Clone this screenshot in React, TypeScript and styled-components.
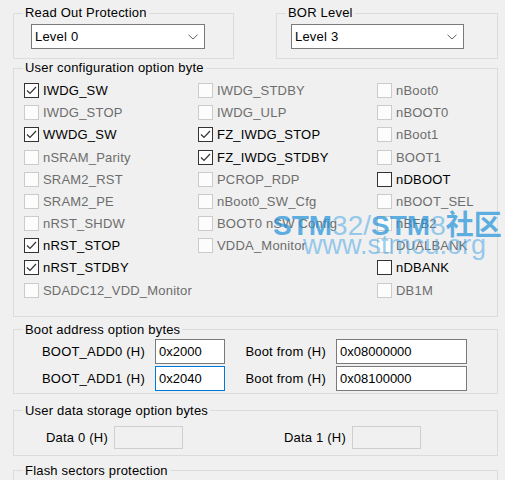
import React from "react";
import styled, { createGlobalStyle } from "styled-components";

const Global = createGlobalStyle`
  html, body {
    margin: 0;
    padding: 0;
    background: #f0f0f0;
    overflow: hidden;
  }
  body {
    font-family: "Liberation Sans", Arial, sans-serif;
    font-size: 13px;
    letter-spacing: 0.2px;
    color: #000;
  }
`;

const Screen = styled.div`
  position: relative;
  width: 505px;
  height: 480px;
  overflow: hidden;
  background: #f0f0f0;
`;

const Page = styled.div`
  width: 485px;
  margin-left: 13px;
  padding-top: 6px;
  display: flex;
  flex-direction: column;
`;

const TopRow = styled.div`
  display: grid;
  grid-template-columns: 221px 222px;
  justify-content: space-between;
`;

const Group = styled.fieldset<{ $mt?: number }>`
  margin: ${(p) => p.$mt ?? 0}px 0 0 0;
  padding: 0;
  min-width: 0;
  border: 1px solid #dcdcdc;
`;

const Legend = styled.legend`
  margin-left: 9px;
  padding: 0 2px;
  line-height: 14px;
  height: 14px;
  font-size: 13px;
`;

const SelectBox = styled.div<{ $w: number; $ml: number }>`
  margin: 4px 0 9px ${(p) => p.$ml}px;
  width: ${(p) => p.$w}px;
  height: 25px;
  box-sizing: border-box;
  border: 1px solid #7a7a7a;
  background: #fff;
  display: flex;
  align-items: center;
  justify-content: space-between;
  padding: 0 6px 0 3px;
`;

const Chevron = () => (
  <svg width="10" height="6" viewBox="0 0 10 6">
    <path d="M0.5 0.8 L5 5 L9.5 0.8" fill="none" stroke="#606060" strokeWidth="1" />
  </svg>
);

const OptionGrid = styled.div`
  display: grid;
  grid-template-columns: 174px 179px 1fr;
  grid-template-rows: repeat(10, 22.2px);
  grid-auto-flow: column;
  padding: 4.4px 0 14.6px 10px;
`;

const Item = styled.label<{ $on: boolean }>`
  display: flex;
  align-items: center;
  gap: 4px;
  white-space: nowrap;
  color: ${(p) => (p.$on ? "#000" : "#6d6d6d")};
`;

const Box = styled.span<{ $on: boolean }>`
  flex: none;
  width: 15px;
  height: 15px;
  box-sizing: border-box;
  border: 1px solid ${(p) => (p.$on ? "#333" : "#cbcbcb")};
  background: ${(p) => (p.$on ? "#fff" : "#fcfcfc")};
  display: flex;
  align-items: center;
  justify-content: center;
`;

const Check = () => (
  <svg width="13" height="13" viewBox="0 0 13 13">
    <path d="M2 6.5 L5 9.5 L11 3" fill="none" stroke="#333" strokeWidth="1.2" />
  </svg>
);

type Opt = { label: string; on?: boolean; checked?: boolean } | null;

const options: Opt[] = [
  { label: "IWDG_SW", on: true, checked: true },
  { label: "IWDG_STOP" },
  { label: "WWDG_SW", on: true, checked: true },
  { label: "nSRAM_Parity" },
  { label: "SRAM2_RST" },
  { label: "SRAM2_PE" },
  { label: "nRST_SHDW" },
  { label: "nRST_STOP", on: true, checked: true },
  { label: "nRST_STDBY", on: true, checked: true },
  { label: "SDADC12_VDD_Monitor" },
  { label: "IWDG_STDBY" },
  { label: "IWDG_ULP" },
  { label: "FZ_IWDG_STOP", on: true, checked: true },
  { label: "FZ_IWDG_STDBY", on: true, checked: true },
  { label: "PCROP_RDP" },
  { label: "nBoot0_SW_Cfg" },
  { label: "BOOT0 nSW Config" },
  { label: "VDDA_Monitor" },
  null,
  null,
  { label: "nBoot0" },
  { label: "nBOOT0" },
  { label: "nBoot1" },
  { label: "BOOT1" },
  { label: "nDBOOT", on: true },
  { label: "nBOOT_SEL" },
  { label: "nBFB2" },
  { label: "DUALBANK" },
  { label: "nDBANK", on: true },
  { label: "DB1M" },
];

const AddrGrid = styled.div`
  display: grid;
  grid-template-columns: 131px 70px 91px 131px;
  grid-template-rows: 25px 25px;
  column-gap: 10px;
  row-gap: 2px;
  align-items: center;
  padding: 2px 0 2px 0;
`;

const FieldLabel = styled.span`
  text-align: right;
  white-space: nowrap;
`;

const Field = styled.div<{ $focus?: boolean; $off?: boolean; $h?: number }>`
  height: ${(p) => p.$h ?? 25}px;
  box-sizing: border-box;
  border: 1px solid
    ${(p) => (p.$focus ? "#0078d7" : p.$off ? "#cfcfcf" : "#7a7a7a")};
  background: ${(p) => (p.$off ? "#f0f0f0" : "#fff")};
  display: flex;
  align-items: center;
  padding-left: 3px;
  letter-spacing: 0;
`;

const DataGrid = styled.div`
  display: grid;
  grid-template-columns: 94px 69px 157px 69px;
  column-gap: 6px;
  align-items: center;
  padding: 8px 0 6px 0;
`;

const FlashBody = styled.div`
  height: 40px;
`;

const Watermark = styled.div`
  position: absolute;
  left: 273px;
  top: 212px;
  display: flex;
  flex-direction: column;
  pointer-events: none;
  letter-spacing: 0;
`;

const MarkTitle = styled.div`
  font-family: "Liberation Sans", "Noto Sans CJK SC", sans-serif;
  font-size: 28px;
  line-height: 28px;
  white-space: nowrap;
`;

const Strong = styled.span`
  font-weight: bold;
  color: rgba(38, 148, 218, 0.72);
`;

const Thin = styled.span`
  color: rgba(70, 165, 228, 0.55);
`;

const MarkUrl = styled.div`
  margin: -8px 0 0 30px;
  font-family: "Liberation Sans", sans-serif;
  font-size: 27px;
  line-height: 27px;
  color: rgba(70, 165, 228, 0.55);
  white-space: nowrap;
`;

export default function App() {
  return (
    <Screen>
      <Global />
      <Page>
        <TopRow>
          <Group>
            <Legend>Read Out Protection</Legend>
            <SelectBox $w={174} $ml={17}>
              <span>Level 0</span>
              <Chevron />
            </SelectBox>
          </Group>
          <Group>
            <Legend>BOR Level</Legend>
            <SelectBox $w={173} $ml={14}>
              <span>Level 3</span>
              <Chevron />
            </SelectBox>
          </Group>
        </TopRow>

        <Group $mt={2}>
          <Legend>User configuration option byte</Legend>
          <OptionGrid>
            {options.map((o, i) =>
              o ? (
                <Item key={i} $on={!!o.on}>
                  <Box $on={!!o.on}>{o.checked && <Check />}</Box>
                  {o.label}
                </Item>
              ) : (
                <span key={i} />
              )
            )}
          </OptionGrid>
        </Group>

        <Group $mt={6}>
          <Legend>Boot address option bytes</Legend>
          <AddrGrid>
            <FieldLabel>BOOT_ADD0 (H)</FieldLabel>
            <Field>0x2000</Field>
            <FieldLabel>Boot from (H)</FieldLabel>
            <Field>0x08000000</Field>
            <FieldLabel>BOOT_ADD1 (H)</FieldLabel>
            <Field $focus>0x2040</Field>
            <FieldLabel>Boot from (H)</FieldLabel>
            <Field>0x08100000</Field>
          </AddrGrid>
        </Group>

        <Group $mt={10}>
          <Legend>User data storage option bytes</Legend>
          <DataGrid>
            <FieldLabel>Data 0 (H)</FieldLabel>
            <Field $off $h={23} />
            <FieldLabel>Data 1 (H)</FieldLabel>
            <Field $off $h={23} />
          </DataGrid>
        </Group>

        <Group $mt={8}>
          <Legend>Flash sectors protection</Legend>
          <FlashBody />
        </Group>
      </Page>

      <Watermark>
        <MarkTitle>
          <Strong>STM</Strong>
          <Thin>32/</Thin>
          <Strong>STM</Strong>
          <Thin>8</Thin>
          <Strong>社区</Strong>
        </MarkTitle>
        <MarkUrl>www.stmcu.org</MarkUrl>
      </Watermark>
    </Screen>
  );
}
